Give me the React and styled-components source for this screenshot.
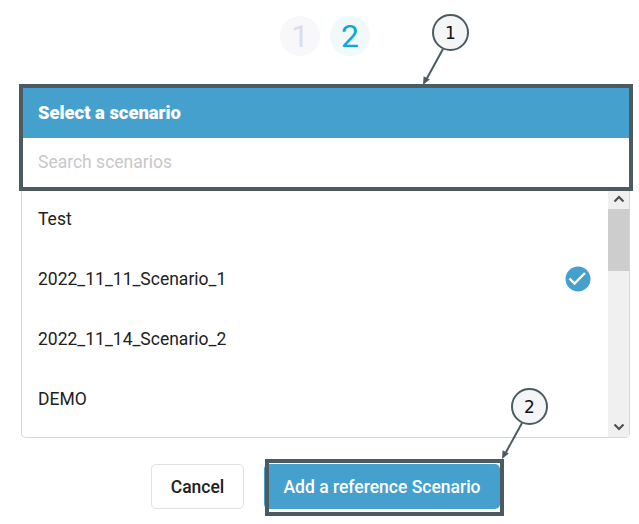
import React from 'react';
import styled, { createGlobalStyle } from 'styled-components';

const scenarios = [
    { name: 'Test' },
    { name: '2022_11_11_Scenario_1', selected: true },
    { name: '2022_11_14_Scenario_2' },
    { name: 'DEMO' },
];

function App() {
    return <Page>
        <GlobalStyle />
        <Steps>
            <Step>1</Step>
            <Step $active>2</Step>
        </Steps>

        <Card>
            <Header>Select a scenario</Header>
            <Search placeholder="Search scenarios" />
            <Body>
                <List>
                    {scenarios.map((scenario) => (
                        <Row key={scenario.name}>
                            {scenario.name}
                            {scenario.selected && <CheckIcon />}
                        </Row>
                    ))}
                </List>
                <Scrollbar>
                    <ScrollArrow>
                        <svg width="12" height="8" viewBox="0 0 12 8"><path d="M1.5 6.5 6 2l4.5 4.5" fill="none" stroke="#505050" strokeWidth="2.2" /></svg>
                    </ScrollArrow>
                    <Thumb />
                    <ScrollRest />
                    <ScrollArrow>
                        <svg width="12" height="8" viewBox="0 0 12 8"><path d="M1.5 1.5 6 6l4.5-4.5" fill="none" stroke="#505050" strokeWidth="2.2" /></svg>
                    </ScrollArrow>
                </Scrollbar>
            </Body>
            <HeaderHighlight />
            <Callout $left={392} $top={-74} $number="1" />
        </Card>

        <Footer>
            <CancelButton>Cancel</CancelButton>
            <AddWrapper>
                <AddButton>Add a reference Scenario</AddButton>
                <AddHighlight />
                <Callout $left={229} $top={-76} $number="2" />
            </AddWrapper>
        </Footer>
    </Page>
}

function CheckIcon() {
    return <CheckSvg width="26" height="26" viewBox="0 0 26 26">
        <circle cx="13" cy="13" r="12.5" fill="#45a0ce" />
        <path d="M4.5 12.500 9.500 17.500 20 7" fill="none" stroke="#fff" strokeWidth="2.4" />
    </CheckSvg>
}

function Callout({ $left, $top, $number }) {
    return <CalloutBox $left={$left} $top={$top}>
        <svg width="60" height="80" viewBox="0 0 60 80">
            <line x1="29" y1="35" x2="12" y2="66" stroke="#4c5b60" strokeWidth="2" />
            <path d="M9 71l.6-8.700 6.200 3.200z" fill="#4c5b60" />
        </svg>
        <CalloutCircle>{$number}</CalloutCircle>
    </CalloutBox>
}

const GlobalStyle = createGlobalStyle`
    html, body {
        margin: 0;
        padding: 0;
        background: #fff;
    }
    body {
        font-family: Roboto, "Liberation Sans", sans-serif;
    }
    * {
        box-sizing: border-box;
    }
`;

const Page = styled.div`
    width: 639px;
    height: 524px;
    padding: 16px 9px 0 21px;
    overflow: hidden;
`;

const Steps = styled.div`
    display: flex;
    justify-content: center;
    gap: 10px;
    margin-bottom: 32px;
    padding-right: 1px;
`;

const Step = styled.div`
    width: 40px;
    height: 40px;
    border-radius: 50%;
    display: flex;
    align-items: center;
    justify-content: center;
    font-size: 32px;
    color: ${(p) => (p.$active ? '#0fa6dc' : '#dcdcec')};
    background: ${(p) => (p.$active ? '#f1f9fd' : '#f8f8fb')};
`;

const Card = styled.div`
    position: relative;
    height: 350px;
    display: flex;
    flex-direction: column;
    border: 1px solid #d5d3e4;
    border-top: 0;
    border-radius: 0 0 5px 5px;
`;

const Header = styled.div`
    height: 50px;
    margin: 0 -1px;
    padding: 0 0 2px 17px;
    display: flex;
    align-items: center;
    background: #45a0ce;
    color: #fff;
    font-size: 18.4px;
    font-weight: 900;
`;

const Search = styled.input`
    height: 48px;
    flex: none;
    width: 100%;
    margin-bottom: 3px;
    padding: 0 16px;
    border: 0;
    outline: 0;
    background: #fff;
    font-family: inherit;
    font-size: 17.5px;
    &::placeholder {
        color: #c8c8c8;
        opacity: 1;
    }
`;

const Body = styled.div`
    flex: 1;
    min-height: 0;
    display: flex;
`;

const List = styled.div`
    flex: 1;
    overflow: hidden;
`;

const Row = styled.div`
    height: 60px;
    padding: 0 17px 0 16px;
    display: flex;
    align-items: center;
    justify-content: space-between;
    font-size: 17.5px;
    color: #212121;
`;

const CheckSvg = styled.svg`
    display: block;
`;

const Scrollbar = styled.div`
    width: 21px;
    display: flex;
    flex-direction: column;
    background: #f0f0f0;
`;

const ScrollArrow = styled.div`
    height: 20px;
    flex: none;
    display: flex;
    align-items: center;
    justify-content: center;
`;

const Thumb = styled.div`
    height: 62px;
    flex: none;
    background: #cdcdcd;
`;

const ScrollRest = styled.div`
    flex: 1;
`;

const HeaderHighlight = styled.div`
    position: absolute;
    left: -3px;
    right: -4px;
    top: -4px;
    height: 107px;
    border: 4px solid #4c5b60;
    pointer-events: none;
`;

const CalloutBox = styled.div`
    position: absolute;
    left: ${(p) => p.$left}px;
    top: ${(p) => p.$top}px;
    width: 60px;
    height: 80px;
`;

const CalloutCircle = styled.div`
    position: absolute;
    left: 0;
    top: 0;
    width: 37px;
    height: 37px;
    margin-left: 18px;
    border: 2px solid #4c5b60;
    border-radius: 50%;
    background: #f3f5f7;
    display: flex;
    align-items: center;
    justify-content: center;
    font-family: "DejaVu Sans", sans-serif;
    font-size: 17px;
    color: #111;
`;

const Footer = styled.div`
    display: flex;
    justify-content: center;
    gap: 20px;
    margin-top: 26px;
`;

const CancelButton = styled.button`
    width: 93px;
    height: 45px;
    border: 1px solid #e2e2e2;
    border-radius: 5px;
    background: #fff;
    color: #212121;
    font-family: inherit;
    font-size: 17.5px;
    font-weight: 500;
`;

const AddWrapper = styled.div`
    position: relative;
`;

const AddButton = styled.button`
    display: block;
    width: 236px;
    height: 45px;
    border: 0;
    border-radius: 5px;
    background: #45a0ce;
    color: #fff;
    font-family: inherit;
    font-size: 17.5px;
    font-weight: 500;
`;

const AddHighlight = styled.div`
    position: absolute;
    left: 1px;
    top: -5px;
    width: 239px;
    height: 57px;
    border: 4px solid #4c5b60;
    pointer-events: none;
`;

export default App
